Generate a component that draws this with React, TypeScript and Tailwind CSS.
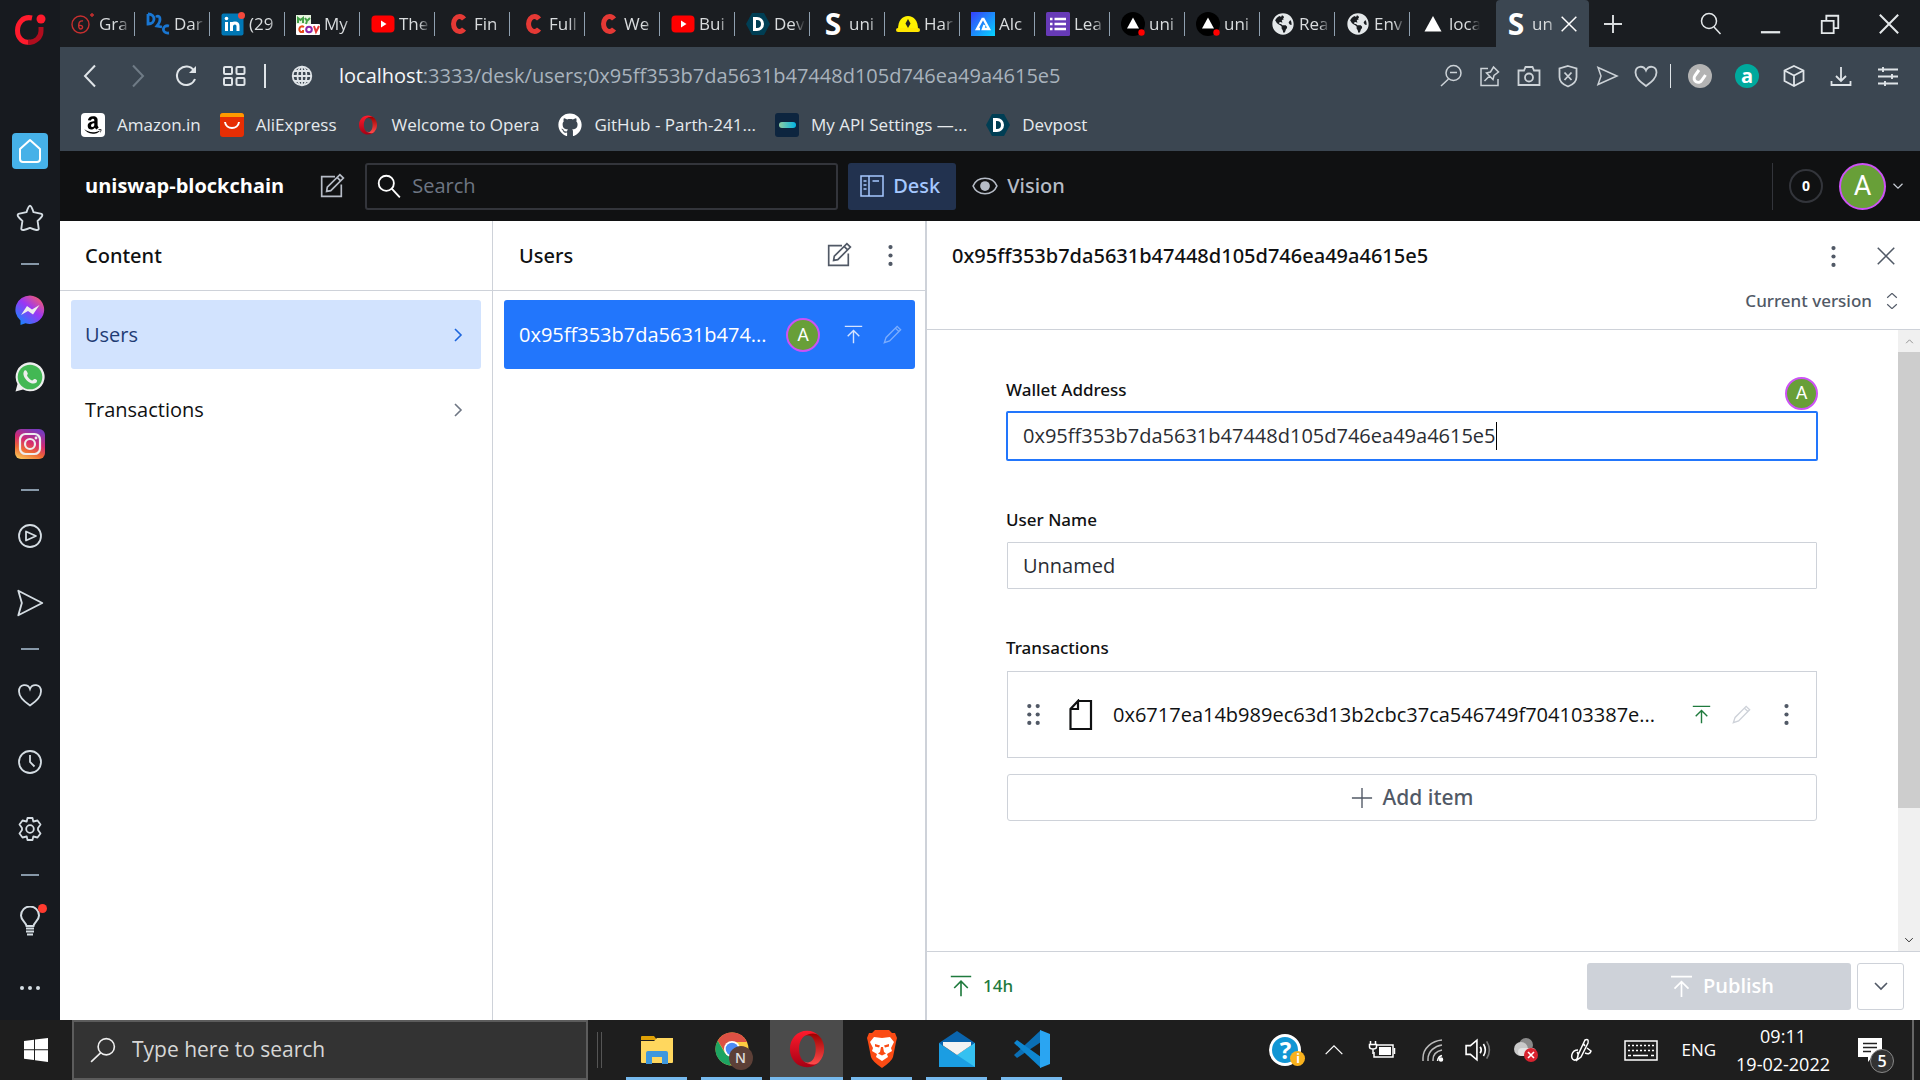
import { ReactNode } from "react";
import { FaAmazon, FaGithub, FaGlobeAmericas } from "react-icons/fa";

type IconProps = {
  size?: number;
  box?: string;
  stroke?: number;
  className?: string;
  children: ReactNode;
};

function Icon({ size = 24, box = "0 0 24 24", stroke = 1.5, className = "", children }: IconProps) {
  return (
    <svg
      width={size}
      height={size}
      viewBox={box}
      fill="none"
      stroke="currentColor"
      strokeWidth={stroke}
      className={`shrink-0 ${className}`}
      aria-hidden="true"
    >
      {children}
    </svg>
  );
}

/* ---------- studio icons ---------- */

type GlyphProps = { size?: number; className?: string };

function ComposeIcon({ size = 35, className }: GlyphProps) {
  return (
    <Icon size={size} box="0 0 25 25" stroke={1.2} className={className}>
      <path d="M15 5.5H5.5V19.5H19.5V11M9 16L9.5 13L18.5 4L21 6.5L12 15.5L9 16ZM16.5 6L19 8.5" />
    </Icon>
  );
}

function PublishIcon({ size = 29, className }: GlyphProps) {
  return (
    <Icon size={size} box="0 0 25 25" stroke={1.2} className={className}>
      <path d="M5 5.5H20M12.5 20V9.5M7.5 14L12.5 9L17.5 14" />
    </Icon>
  );
}

function PencilIcon({ size = 29, className }: GlyphProps) {
  return (
    <Icon size={size} box="0 0 25 25" stroke={1.2} className={className}>
      <path d="M15 7L18 10M5.5 19.5L7 15L16.5 5.5L19.5 8.5L10 18L5.5 19.5Z" />
    </Icon>
  );
}

function DotsIcon({ className }: GlyphProps) {
  return (
    <Icon size={35} box="0 0 25 25" className={className}>
      <g fill="currentColor" stroke="none">
        <circle cx="12.5" cy="6.5" r="1.5" />
        <circle cx="12.5" cy="12.5" r="1.5" />
        <circle cx="12.5" cy="18.5" r="1.5" />
      </g>
    </Icon>
  );
}

function Chevron({ d, size = 16, className }: GlyphProps & { d: string }) {
  return (
    <Icon size={size} box="0 0 16 16" stroke={1.6} className={className}>
      <path d={d} />
    </Icon>
  );
}

const RIGHT = "M5 2L11 8L5 14";
const DOWN = "M2 5L8 11L14 5";
const UP = "M2 11L8 5L14 11";

function Avatar({ size }: { size: "sm" | "md" | "lg" }) {
  const sizes = {
    sm: "size-[33px] text-lg leading-5",
    md: "size-[34px] text-lg leading-5",
    lg: "size-[47px] text-[27px] leading-8",
  };
  return (
    <span
      className={`grid shrink-0 place-items-center rounded-full border-2 border-[#cc52f5] bg-[#689f38] font-['Roboto',sans-serif] text-white ${sizes[size]}`}
    >
      A
    </span>
  );
}

/* ---------- favicons ---------- */

function SanityMark() {
  return <span className="grid size-6 place-items-center text-[30px] leading-6 font-bold text-white">S</span>;
}

function Coursera() {
  return (
    <Icon stroke={5} className="text-[#e53935]">
      <path d="M18 7A6 7.5 0 1 0 18 17" />
    </Icon>
  );
}

function YouTube() {
  return (
    <Icon>
      <rect x="0.5" y="3.5" width="23" height="17" rx="4" fill="#f00" stroke="none" />
      <path d="M10 8.5V15.5L15.5 12Z" fill="#fff" stroke="none" />
    </Icon>
  );
}

function Devpost() {
  return (
    <Icon>
      <path d="M6 1H18L24 12L18 23H6L0 12Z" fill="#003e54" stroke="none" />
      <path d="M8.5 6.5H11A5.5 5.5 0 0 1 11 17.5H8.5Z" stroke="#fff" strokeWidth="3" />
    </Icon>
  );
}

function Vercel({ dot }: { dot?: boolean }) {
  return (
    <Icon>
      {dot && <circle cx="12" cy="12" r="12" fill="#000" stroke="none" />}
      <path d={dot ? "M12 5.5L18 16.5H6Z" : "M12 4L20.5 19.5H3.5Z"} fill="#fff" stroke="none" />
      {dot && <circle cx="20.5" cy="20.5" r="3.2" fill="#f00" stroke="none" />}
    </Icon>
  );
}

function OperaO({ size = 24, className }: GlyphProps) {
  return (
    <Icon size={size} className={className}>
      <defs>
        <linearGradient id="opera-left" x1="0" y1="0" x2="0" y2="1">
          <stop offset="0" stopColor="#ff1b2d" />
          <stop offset="1" stopColor="#a70014" />
        </linearGradient>
        <linearGradient id="opera-right" x1="0" y1="0" x2="0" y2="1">
          <stop offset="0" stopColor="#9c0000" />
          <stop offset="1" stopColor="#ff4b4b" />
        </linearGradient>
      </defs>
      <path
        d="M12 0.5C5.8 0.5 1.2 5.5 1.2 12S5.8 23.5 12 23.5C15 23.5 17.5 22.5 19.3 20.5L14.5 20.3C11 22.5 7 18.5 7 12S11 1.5 14.5 3.7L19.3 3.5C17.5 1.5 15 0.5 12 0.5Z"
        fill="url(#opera-left)"
        stroke="none"
      />
      <path
        d="M10 4.5C12 2.5 17 1 19.5 3.7C24 8 24 16 19.5 20.3C17 23 12 21.5 10 19.5C14.5 22.5 17.5 18 17.5 12S14.5 1.5 10 4.5Z"
        fill="url(#opera-right)"
        stroke="none"
      />
    </Icon>
  );
}

function Globe() {
  return <FaGlobeAmericas className="size-[22px] text-[#e4e8ea]" />;
}

type Tab = { label: string; icon: ReactNode };

const tabs: Tab[] = [
  {
    label: "Gra",
    icon: (
      <Icon className="text-[#c62f2f]" stroke={1.4}>
        <circle cx="9.5" cy="12.5" r="8.5" />
        <path d="M12 9C7 7.5 6.5 17 9.5 17S12.5 12.5 8 13.5M21 1V5M19 3H23" />
      </Icon>
    ),
  },
  {
    label: "Dar",
    icon: (
      <Icon className="text-[#1976d2]" stroke={2.8}>
        <path d="M2 2V12C10 12 10 2 2 2M10 5C14 2 16 8 11 14L16 15M23 14C16 12 15 22 23 21" />
      </Icon>
    ),
  },
  {
    label: "(29",
    icon: (
      <Icon>
        <rect x="0.5" y="1.5" width="22" height="22" rx="2" fill="#0077b5" stroke="none" />
        <path d="M5.5 10V19M10.5 19V10M10.5 14C11 10 17 10 17 14V19" stroke="#fff" strokeWidth="3" />
        <circle cx="5.5" cy="6.5" r="1.8" fill="#fff" stroke="none" />
        <circle cx="20.5" cy="3.5" r="3.5" fill="#f5483c" stroke="none" />
      </Icon>
    ),
  },
  {
    label: "My",
    icon: (
      <Icon stroke={0}>
        <rect y="3" width="15" height="10" fill="#e8f5e0" />
        <rect y="12" width="24" height="11" rx="1" fill="#fff" />
        <path d="M2 11V6L4.5 8L7 6V11M9 6L11 9L14 6M11 9L10 12" stroke="#43a047" strokeWidth="2" />
        <path d="M8 15C3 12 1 21 7 20V18" stroke="#e64a19" strokeWidth="2" />
        <circle cx="13" cy="17.5" r="2.8" stroke="#8e24aa" strokeWidth="2" />
        <path d="M18 14L20 20L23 14" stroke="#e53935" strokeWidth="2" />
      </Icon>
    ),
  },
  { label: "The", icon: <YouTube /> },
  { label: "Fin", icon: <Coursera /> },
  { label: "Full", icon: <Coursera /> },
  { label: "We", icon: <Coursera /> },
  { label: "Bui", icon: <YouTube /> },
  { label: "Dev", icon: <Devpost /> },
  { label: "uni", icon: <SanityMark /> },
  {
    label: "Har",
    icon: (
      <Icon stroke={0}>
        <path d="M2 17C2 9 6 4 12 4S22 9 22 17Z" fill="#fff100" />
        <rect x="0" y="16" width="24" height="4" rx="2" fill="#ffe600" />
        <path d="M12 7L14.5 11.5L12 16L9.5 11.5Z" fill="#222" />
      </Icon>
    ),
  },
  {
    label: "Alc",
    icon: (
      <Icon>
        <defs>
          <linearGradient id="alchemy" x1="0" y1="0" x2="1" y2="1">
            <stop offset="0" stopColor="#363ff9" />
            <stop offset="1" stopColor="#05d5ff" />
          </linearGradient>
        </defs>
        <rect width="24" height="24" fill="url(#alchemy)" stroke="none" />
        <path d="M12 6L6 17H9M12 6L18 17H12L13.5 13" stroke="#fff" strokeWidth="2.4" />
      </Icon>
    ),
  },
  {
    label: "Lea",
    icon: (
      <Icon>
        <rect width="24" height="24" rx="1.5" fill="#673ab7" stroke="none" />
        <path d="M4 7H6.5M4 12H6.5M4 17H6.5M8.5 7H20M8.5 12H20M8.5 17H20" stroke="#fff" strokeWidth="2.6" />
      </Icon>
    ),
  },
  { label: "uni", icon: <Vercel dot /> },
  { label: "uni", icon: <Vercel dot /> },
  { label: "Rea", icon: <Globe /> },
  { label: "Env", icon: <Globe /> },
  { label: "loca", icon: <Vercel /> },
];

function TabStrip() {
  return (
    <div className="flex h-[47px] bg-[#1a1d21] text-[#d9dcde]">
      <div className="flex min-w-0 flex-1">
        {tabs.map((tab, i) => (
          <button key={i} className="flex w-[75px] items-center overflow-hidden pl-[11px]">
            <span className="grid size-6 shrink-0 place-items-center">{tab.icon}</span>
            <span className="ml-1 min-w-0 flex-1 overflow-hidden text-left text-[17px] whitespace-nowrap [mask-image:linear-gradient(to_right,black_65%,transparent)]">
              {tab.label}
            </span>
            <span className={i < tabs.length - 1 ? "ml-1 h-6 w-px bg-[#8fa0b0]" : "ml-1 w-px"} />
          </button>
        ))}
      </div>
      <button className="flex w-[93px] items-center rounded-t-sm bg-[#3b4651] pl-2 text-[17px]">
        <SanityMark />
        <span className="ml-1 w-[24px] overflow-hidden text-left [mask-image:linear-gradient(to_right,black_70%,transparent)]">
          un
        </span>
        <Icon size={16} stroke={2.2} className="ml-[5px] text-white">
          <path d="M1 1L23 23M23 1L1 23" />
        </Icon>
      </button>
      <div className="flex w-[331px] items-center pl-[15px]">
        <button aria-label="New tab">
          <Icon size={18} stroke={2.6}>
            <path d="M12 0V24M0 12H24" />
          </Icon>
        </button>
        <div className="ml-[77px] flex items-center gap-[37px] text-[#e4e8ea]">
          <button aria-label="Search tabs">
            <Icon size={24}>
              <circle cx="10" cy="9" r="7.5" />
              <path d="M15 15L21.5 22" />
            </Icon>
          </button>
          <button aria-label="Minimize">
            <Icon size={22} stroke={2.5}>
              <path d="M1 21H22" />
            </Icon>
          </button>
          <button aria-label="Restore">
            <Icon size={22} stroke={2}>
              <path d="M3 8.5H16V22H3ZM8 8V3H21V16.5H16" />
            </Icon>
          </button>
          <button aria-label="Close">
            <Icon size={22} stroke={2.2}>
              <path d="M2 2L22 22M22 2L2 22" />
            </Icon>
          </button>
        </div>
      </div>
    </div>
  );
}

function AddressBar() {
  return (
    <div className="flex h-[57px] items-center text-[#dfe4e8]">
      <div className="flex flex-1 items-center pl-[18px]">
        <div className="flex items-center gap-6">
          <button aria-label="Back">
            <Icon stroke={2}>
              <path d="M17 1.5L7 12L17 22.5" />
            </Icon>
          </button>
          <button aria-label="Forward" className="text-[#6f7b86]">
            <Icon stroke={2}>
              <path d="M7 1.5L17 12L7 22.5" />
            </Icon>
          </button>
          <button aria-label="Reload">
            <Icon stroke={2}>
              <path d="M20 6.5A9.3 9.3 0 1 0 21 15" />
              <path d="M22 2V9H15Z" fill="currentColor" stroke="none" />
            </Icon>
          </button>
          <button aria-label="Speed dial">
            <Icon stroke={2}>
              <rect x="2" y="3" width="8" height="7" rx="1" />
              <rect x="14.5" y="3" width="8" height="7" rx="1" />
              <rect x="2" y="14" width="8" height="7" rx="1" />
              <rect x="14.5" y="14" width="8" height="7" rx="1" />
            </Icon>
          </button>
        </div>
        <span className="ml-[18px] h-6 w-0.5 bg-[#dfe4e8]" />
        <Icon stroke={1.8} className="ml-6">
          <circle cx="12" cy="12" r="9.3" />
          <ellipse cx="12" cy="12" rx="4.5" ry="9.3" />
          <path d="M12 2.5V21.5M2.5 12H21.5M4 7H20M4 17H20" />
        </Icon>
        <p className="ml-[25px] text-xl whitespace-nowrap text-[#a9b3bd]">
          <span className="text-[#f5f7f8]">localhost</span>
          :3333/desk/users;0x95ff353b7da5631b47448d105d746ea49a4615e5
        </p>
      </div>
      <div className="flex items-center gap-[15px] text-[#ccd2d7]">
        <button aria-label="Zoom">
          <Icon>
            <circle cx="14.5" cy="9" r="7.5" />
            <path d="M9.5 15L2 22M11 8.5H18" />
          </Icon>
        </button>
        <button aria-label="Pin">
          <Icon>
            <path d="M10 4.5H3V21.5H20V15M6.5 17L11.5 12M8.5 9L15 15.5L16 11.5L20.5 8L15.5 3L12.5 8Z" />
          </Icon>
        </button>
        <button aria-label="Snapshot">
          <Icon stroke={1.8}>
            <path d="M1.5 6.5H7L8.5 3H15.5L17 6.5H22.5V21H1.5Z" />
            <circle cx="12" cy="13.5" r="4" />
          </Icon>
        </button>
        <button aria-label="Blocker">
          <Icon stroke={1.8}>
            <path d="M12 2L20.5 4.5V13C20.5 18 16 21 12 22.5C8 21 3.5 18 3.5 13V4.5ZM8.5 8.5L15.5 16M15.5 8.5L8.5 16" />
          </Icon>
        </button>
        <button aria-label="Flow">
          <Icon>
            <path d="M3 3.5L22 12L3 20.5L6 12Z" />
          </Icon>
        </button>
        <button aria-label="Bookmark">
          <Icon stroke={1.8}>
            <path d="M12 22C6 17.5 1.5 14 1.5 8.5C1.5 1.5 9.5 1 12 6.5C14.5 1 22.5 1.5 22.5 8.5C22.5 14 18 17.5 12 22Z" />
          </Icon>
        </button>
      </div>
      <span className="ml-3 h-6 w-px bg-[#dfe4e8]" />
      <div className="ml-[17px] flex items-center gap-[23px] pr-5 text-[#dfe4e8]">
        <button aria-label="Extension">
          <Icon>
            <circle cx="12" cy="12" r="12" fill="#b3b3b3" stroke="none" />
            <path d="M11 6L7 11.5C3.5 17 11 21 14 16L17.5 11" stroke="#fff" strokeWidth="3" />
          </Icon>
        </button>
        <button aria-label="Amazon assistant">
          <span className="grid size-6 place-items-center rounded-full bg-[#00a99d] text-xl leading-5 font-bold text-white">
            a
          </span>
        </button>
        <button aria-label="Wallet">
          <Icon stroke={1.8}>
            <path d="M12 2L21.5 6.5V17L12 22L2.5 17V6.5ZM2.5 6.5L12 11.5L21.5 6.5M12 11.5V22" />
          </Icon>
        </button>
        <button aria-label="Downloads">
          <Icon stroke={1.8}>
            <path d="M12 3V17M7 12L12 17L17 12M2.5 17V21H21.5V17" />
          </Icon>
        </button>
        <button aria-label="Easy setup">
          <Icon stroke={1.9}>
            <path d="M2 5.5H22M2 12.5H22M2 19.5H22M7 3V8M16 10V15M9 17V22" />
          </Icon>
        </button>
      </div>
    </div>
  );
}

const bookmarks: Tab[] = [
  {
    label: "Amazon.in",
    icon: (
      <span className="grid size-6 place-items-center rounded bg-white">
        <FaAmazon className="size-5 text-black" />
      </span>
    ),
  },
  {
    label: "AliExpress",
    icon: (
      <Icon>
        <rect width="24" height="24" rx="3" fill="#e62e04" stroke="none" />
        <path d="M0 4V3A3 3 0 0 1 3 0H21A3 3 0 0 1 24 3V4Z" fill="#ff9a00" stroke="none" />
        <path d="M5 9C6 17 18 17 19 9" stroke="#fff" strokeWidth="2" />
      </Icon>
    ),
  },
  { label: "Welcome to Opera", icon: <OperaO size={20} /> },
  { label: "GitHub - Parth-241...", icon: <FaGithub className="size-6 text-white" /> },
  {
    label: "My API Settings —...",
    icon: (
      <Icon>
        <defs>
          <linearGradient id="tmdb">
            <stop offset="0" stopColor="#90cea1" />
            <stop offset="1" stopColor="#01b4e4" />
          </linearGradient>
        </defs>
        <rect width="24" height="24" rx="3" fill="#0d253f" stroke="none" />
        <rect x="4" y="9" width="17" height="6" rx="3" fill="url(#tmdb)" stroke="none" />
      </Icon>
    ),
  },
  { label: "Devpost", icon: <Devpost /> },
];

function BookmarksBar() {
  return (
    <nav className="flex h-[47px] items-center gap-[19px] pb-[5px] pl-[21px] text-[17px] text-[#e6eaed]">
      {bookmarks.map((b) => (
        <a key={b.label} href="#" className="flex items-center gap-3 whitespace-nowrap">
          <span className="grid w-6 shrink-0 place-items-center">{b.icon}</span>
          {b.label}
        </a>
      ))}
    </nav>
  );
}

/* ---------- opera sidebar ---------- */

function SideItem({ label, children }: { label: string; children: ReactNode }) {
  return (
    <button aria-label={label} className="grid h-[67px] w-full place-items-center last:h-[66px]">
      {children}
    </button>
  );
}

function SideRule() {
  return (
    <div className="grid h-[25px] w-full place-items-center">
      <span className="h-0.5 w-[18px] bg-[#8798a8]" />
    </div>
  );
}

function Sidebar() {
  return (
    <aside className="w-[60px] shrink-0 bg-[#171a1f] text-[#d5dde3]">
      <div className="flex h-[117px] justify-center pt-[13px]">
        <Icon size={34} box="0 0 34 34">
          <path d="M19 5C10 3 4.5 10 4.5 17.5C4.5 25 10 30.5 17 29" stroke="#ff1b2d" strokeWidth="5" />
          <path d="M28 14V18C28 24 23 29.5 15 29.5" stroke="#b00d1e" strokeWidth="5" />
          <circle cx="28" cy="6" r="4.5" fill="#ff1b2d" stroke="none" />
        </Icon>
      </div>
      <SideItem label="Home">
        <span className="grid size-9 place-items-center rounded bg-[#46b1e8] text-white">
          <Icon size={28} box="0 0 28 28" stroke={2}>
            <path d="M14 3L24 12V22Q24 25 21 25H7Q4 25 4 22V12Z" strokeLinejoin="round" />
          </Icon>
        </span>
      </SideItem>
      <SideItem label="Speed dials">
        <Icon size={28} stroke={1.6}>
          <path
            d="M12 1.5Q13.2 1.5 15 7L22 8.5Q24 10 18.5 14.5L19.5 21.5Q19 23.5 12 20.5Q5 23.5 4.5 21.5L5.5 14.5Q0 10 2 8.5L9 7Q10.8 1.5 12 1.5Z"
            strokeLinejoin="round"
          />
        </Icon>
      </SideItem>
      <SideRule />
      <SideItem label="Messenger">
        <Icon size={30} box="0 0 30 30">
          <defs>
            <linearGradient id="msgr" x1="0.1" y1="1" x2="0.9" y2="0">
              <stop offset="0" stopColor="#0a8dff" />
              <stop offset="0.55" stopColor="#9a36f5" />
              <stop offset="1" stopColor="#ff6060" />
            </linearGradient>
          </defs>
          <path d="M15 0.5A14.5 14.2 0 1 1 10.5 28.3L5.5 30V25.5A14.5 14.2 0 0 1 15 0.5Z" fill="url(#msgr)" stroke="none" />
          <path d="M6 20L12 11L17 14.5L24.5 10L18 19.5L13 16Z" fill="#eee" stroke="none" />
        </Icon>
      </SideItem>
      <SideItem label="WhatsApp">
        <Icon size={30} box="0 0 30 30">
          <path d="M0.5 29.5L2.5 22A14.5 14.5 0 1 1 8 27.5Z" fill="#eee" stroke="none" />
          <circle cx="15" cy="15" r="12.3" fill="#43b854" stroke="none" />
          <path
            d="M9.5 8.5C11 7.5 12 9 12.8 11.5C12.5 13 11.5 13 12.5 14.5C14 17 16 18 17 18.5C18.5 18 18.5 16.5 20 17C22.5 18 22.5 18.5 21.5 20.5C16 25 5 14 9.5 8.5Z"
            fill="#eee"
            stroke="none"
          />
        </Icon>
      </SideItem>
      <SideItem label="Instagram">
        <Icon size={30} box="0 0 30 30">
          <defs>
            <linearGradient id="insta" x1="0.2" y1="1" x2="0.6" y2="0">
              <stop offset="0" stopColor="#f7c25a" />
              <stop offset="0.3" stopColor="#ee6a34" />
              <stop offset="0.6" stopColor="#d42a72" />
              <stop offset="1" stopColor="#7a3bbd" />
            </linearGradient>
          </defs>
          <rect width="30" height="30" rx="6" fill="url(#insta)" stroke="none" />
          <g stroke="#eee" strokeWidth="2.2">
            <rect x="5" y="5" width="20" height="20" rx="5.5" />
            <circle cx="15" cy="15" r="5" />
          </g>
          <circle cx="21" cy="9" r="1.4" fill="#eee" stroke="none" />
        </Icon>
      </SideItem>
      <SideRule />
      <SideItem label="Player">
        <Icon stroke={1.8}>
          <circle cx="12" cy="12" r="11" />
          <path d="M8 7.5L18 12L8 16.5Z" strokeLinejoin="round" />
        </Icon>
      </SideItem>
      <SideItem label="My Flow">
        <Icon size={28} stroke={1.6}>
          <path d="M2 1.5L22.5 12L2 22.5L5 12Z" strokeLinejoin="round" />
        </Icon>
      </SideItem>
      <SideRule />
      <SideItem label="Bookmarks">
        <Icon stroke={1.8}>
          <path d="M12 22.5C6 18.5 1 14 1 8.5C1 0.5 10 0.5 12 6C14 0.5 23 0.5 23 8.5C23 14 18 18.5 12 22.5Z" />
        </Icon>
      </SideItem>
      <SideItem label="History">
        <Icon stroke={1.8}>
          <circle cx="12" cy="12" r="11" />
          <path d="M12 5V12L16.5 16.5" />
        </Icon>
      </SideItem>
      <SideItem label="Settings">
        <Icon stroke={1.8}>
          <path
            d="M9.5 1H14.5L15.3 4.5L19.5 3.5L22.5 7.5L20 11V13L22.5 16.5L19.5 20.5L15.3 19.5L14.5 23H9.5L8.7 19.5L4.5 20.5L1.5 16.5L4 13V11L1.5 7.5L4.5 3.5L8.7 4.5Z"
            strokeLinejoin="round"
          />
          <circle cx="12" cy="12" r="3.8" />
        </Icon>
      </SideItem>
      <SideRule />
      <SideItem label="Tips">
        <span className="relative">
          <Icon size={30} box="0 0 30 30" stroke={2}>
            <path d="M11.5 20C11 16 6 14.5 6 9.5A9 9 0 0 1 24 9.5C24 14.5 19 16 18.5 20ZM11 22.5H19M11 25.5H19M12 28.5H18" />
          </Icon>
          <span className="absolute -top-[2px] -right-[2px] size-[9px] rounded-full bg-[#ff3b2f]" />
        </span>
      </SideItem>
      <SideItem label="More">
        <Icon>
          <g fill="currentColor" stroke="none">
            <circle cx="4" cy="13" r="2" />
            <circle cx="12" cy="13" r="2" />
            <circle cx="20" cy="13" r="2" />
          </g>
        </Icon>
      </SideItem>
    </aside>
  );
}

/* ---------- studio ---------- */

function StudioNav() {
  return (
    <header className="flex h-[70px] items-center bg-[#101112] pr-4 pl-[25px]">
      <h1 className="text-xl font-bold whitespace-nowrap text-white">uniswap-blockchain</h1>
      <button aria-label="New document" className="ml-[30px] text-[#b6bcc6]">
        <ComposeIcon />
      </button>
      <label className="ml-4 flex h-[47px] w-[473px] items-center rounded-[3px] border-2 border-[#33353b] pl-[9px] text-white">
        <Icon size={26} stroke={1.7}>
          <circle cx="9.5" cy="9.5" r="7" />
          <path d="M14.5 14.5L22 22.5" />
        </Icon>
        <input
          type="search"
          aria-label="Search"
          placeholder="Search"
          className="ml-[10px] min-w-0 flex-1 bg-transparent text-xl outline-none placeholder:text-[#6e7683]"
        />
      </label>
      <button className="ml-[10px] flex h-[47px] w-[108px] shrink-0 items-center gap-[9px] rounded-[3px] bg-[#22324f] pl-3 font-['Noto_Sans'] text-xl font-medium text-[#a6c8ff]">
        <Icon stroke={1.5}>
          <path d="M1 2H23V22H1ZM9 2V22M12.5 7H19M3.5 7H6.5M3.5 11H6.5M3.5 15H6.5" />
        </Icon>
        Desk
      </button>
      <button className="ml-4 flex items-center gap-[9px] font-['Noto_Sans'] text-xl font-medium text-[#b6bcc6]">
        <Icon size={26} stroke={1.5}>
          <path d="M1 12C5 2.5 19 2.5 23 12C19 21.5 5 21.5 1 12Z" />
          <circle cx="12" cy="12" r="4.5" fill="currentColor" stroke="none" />
        </Icon>
        Vision
      </button>
      <div className="ml-auto flex h-[47px] items-center border-l border-[#33353b] pl-4">
        <button className="grid size-[34px] place-items-center rounded-full border-2 border-[#33353b] text-sm font-bold text-white">
          0
        </button>
        <button className="ml-4 flex items-center gap-[6px] text-[#c9ced6]">
          <Avatar size="lg" />
          <Chevron d={DOWN} size={12} />
        </button>
      </div>
    </header>
  );
}

function ContentPane() {
  return (
    <section className="border-r border-[#ced2d9]">
      <h2 className="flex h-[70px] items-center border-b border-[#ced2d9] pl-[25px] font-['Noto_Sans'] text-xl font-medium">
        Content
      </h2>
      <nav className="flex flex-col gap-[6px] px-[11px] py-[9px] text-xl">
        <a
          href="#"
          className="flex h-[69px] items-center justify-between rounded-[3px] bg-[#d2e3fe] pr-[15px] pl-[14px] text-[#1f3c74]"
        >
          Users
          <Chevron d={RIGHT} className="text-[#1d66dd]" />
        </a>
        <a href="#" className="flex h-[69px] items-center justify-between pr-[15px] pl-[14px]">
          Transactions
          <Chevron d={RIGHT} className="text-[#6e7683]" />
        </a>
      </nav>
    </section>
  );
}

function UsersPane() {
  return (
    <section className="min-w-0 border-r-2 border-[#ced2d9]">
      <div className="flex h-[70px] items-center border-b border-[#ced2d9] pr-[17px] pl-[26px] text-[#515966]">
        <h2 className="flex-1 font-['Noto_Sans'] text-xl font-medium text-[#101112]">Users</h2>
        <button aria-label="New user">
          <ComposeIcon />
        </button>
        <button aria-label="Menu" className="ml-[17px]">
          <DotsIcon />
        </button>
      </div>
      <div className="py-[9px] pr-[10px] pl-[11px]">
        <a href="#" className="flex h-[69px] items-center rounded-[3px] bg-[#2276fc] pr-2 pl-[15px] text-xl text-white">
          <span className="min-w-0 flex-1 truncate">0x95ff353b7da5631b474...</span>
          <span className="ml-[14px]">
            <Avatar size="md" />
          </span>
          <PublishIcon className="ml-[19px] text-[#d5e4ff]" />
          <PencilIcon className="ml-[10px] text-[#7badfd]" />
        </a>
      </div>
    </section>
  );
}

function Scrollbar() {
  return (
    <div className="flex w-[22px] shrink-0 flex-col bg-[#f0f0f0]">
      <div className="grid h-[22px] place-items-center text-[#8a8a8a]">
        <Chevron d={UP} size={9} />
      </div>
      <div className="h-[456px] bg-[#cdcdcd]" />
      <div className="mt-auto grid h-[22px] place-items-center text-[#303030]">
        <Chevron d={DOWN} size={10} />
      </div>
    </div>
  );
}

function DocumentForm() {
  return (
    <form className="flex min-w-0 flex-1 flex-col pt-[45px] pr-[80px] pl-[79px]">
      <div className="flex h-[36px] items-center justify-between">
        <label htmlFor="wallet" className="pb-[6px] font-['Noto_Sans'] text-[17px] font-medium">
          Wallet Address
        </label>
        <Avatar size="sm" />
      </div>
      <div className="flex h-[50px] items-center rounded-[2px] border-2 border-[#2276fc] px-[15px] text-xl text-[#2a2d33]">
        <input
          id="wallet"
          defaultValue="0x95ff353b7da5631b47448d105d746ea49a4615e5"
          className="field-sizing-content outline-none"
        />
        <span className="h-7 w-px bg-black" />
      </div>
      <label htmlFor="username" className="mt-[47px] font-['Noto_Sans'] text-[17px] leading-[24px] font-medium">
        User Name
      </label>
      <input
        id="username"
        defaultValue="Unnamed"
        className="mx-px mt-[10px] h-[47px] rounded-[1px] border border-[#ced2d9] px-[15px] text-xl text-[#2a2d33] outline-none"
      />
      <h3 className="mt-[47px] font-['Noto_Sans'] text-[17px] leading-[24px] font-medium">Transactions</h3>
      <div className="mx-px mt-[11px] flex h-[87px] items-center border border-[#ced2d9] pr-3 pl-[8px] text-xl">
        <button type="button" aria-label="Drag" className="text-[#515966]">
          <Icon size={35} box="0 0 25 25">
            <g fill="currentColor" stroke="none">
              <circle cx="9.5" cy="6.5" r="1.5" />
              <circle cx="15.5" cy="6.5" r="1.5" />
              <circle cx="9.5" cy="12.5" r="1.5" />
              <circle cx="15.5" cy="12.5" r="1.5" />
              <circle cx="9.5" cy="18.5" r="1.5" />
              <circle cx="15.5" cy="18.5" r="1.5" />
            </g>
          </Icon>
        </button>
        <Icon size={32} box="0 0 32 32" stroke={2.2} className="ml-[14px]">
          <path d="M13 2H26V30H5.5V10L13 2V10H5.5" />
        </Icon>
        <span className="ml-4 min-w-0 flex-1 truncate">0x6717ea14b989ec63d13b2cbc37ca546749f704103387e...</span>
        <PublishIcon className="ml-[16px] text-[#1f7a3d]" />
        <PencilIcon className="ml-[11px] text-[#ced2d9]" />
        <button type="button" aria-label="Item menu" className="ml-[13px] text-[#515966]">
          <DotsIcon />
        </button>
      </div>
      <button
        type="button"
        className="mx-px mt-4 flex h-[47px] items-center justify-center gap-[10px] rounded-[3px] border border-[#ced2d9] font-['Noto_Sans'] text-[21px] font-medium text-[#515966]"
      >
        <Icon size={22}>
          <path d="M12 1V23M1 12H23" />
        </Icon>
        Add item
      </button>
    </form>
  );
}

function DocumentPane() {
  return (
    <section className="flex min-w-0 flex-col">
      <div className="h-[109px] border-b border-[#ced2d9] pl-[25px]">
        <div className="flex h-[70px] items-center pr-[25px] text-[#515966]">
          <h2 className="flex-1 font-['Noto_Sans'] text-xl font-medium text-[#101112]">
            0x95ff353b7da5631b47448d105d746ea49a4615e5
          </h2>
          <button aria-label="Document menu">
            <DotsIcon />
          </button>
          <button aria-label="Close document" className="ml-[26px]">
            <Icon size={18} stroke={2}>
              <path d="M1 1L23 23M23 1L1 23" />
            </Icon>
          </button>
        </div>
        <button className="mr-5 ml-auto flex items-center gap-[12px] font-['Noto_Sans'] text-[17px] leading-[20px] font-medium text-[#515966]">
          Current version
          <Icon size={16} box="0 0 16 20" stroke={1.5}>
            <path d="M2 6L8 0.5L14 6M2 14L8 19.5L14 14" />
          </Icon>
        </button>
      </div>
      <div className="flex flex-1">
        <DocumentForm />
        <Scrollbar />
      </div>
      <footer className="flex h-[69px] items-center border-t border-[#ced2d9] pr-4 pl-[17px]">
        <button className="flex items-center gap-[5px] font-['Noto_Sans'] text-[17px] font-medium text-[#1f7a3d]">
          <PublishIcon size={34} />
          14h
        </button>
        <button className="ml-auto flex h-[47px] w-[264px] items-center justify-center gap-1 rounded-[3px] bg-[#ced2d9] text-xl font-semibold text-white">
          <PublishIcon size={35} />
          Publish
        </button>
        <button
          aria-label="More actions"
          className="ml-[6px] grid h-[47px] w-[47px] place-items-center rounded-[3px] border border-[#ced2d9] text-[#515966]"
        >
          <Chevron d={DOWN} size={16} />
        </button>
      </footer>
    </section>
  );
}

/* ---------- windows taskbar ---------- */

function TaskApp({ label, active, children }: { label: string; active?: boolean; children: ReactNode }) {
  return (
    <button
      aria-label={label}
      className={`flex h-[60px] flex-col items-center ${active ? "w-[73px] bg-[#4b4b4b]" : "w-[61px]"}`}
    >
      <span className="grid flex-1 place-items-center">{children}</span>
      <span className="h-[3px] w-full bg-[#76b9ed]" />
    </button>
  );
}

function Taskbar() {
  return (
    <footer className="flex h-[60px] items-center bg-[#1e1e1e] text-white">
      <button aria-label="Start" className="grid w-[72px] place-items-center">
        <svg width="24" height="24" viewBox="0 0 24 24" fill="white">
          <path d="M0 3L10 1.7V11.3H0ZM11 1.5L24 0V11.3H11ZM0 12.3H10V22L0 20.7ZM11 12.3H24V24L11 22.2Z" />
        </svg>
      </button>
      <label className="flex h-[60px] w-[516px] items-center border-2 border-[#5c5c5c] bg-[#333] pl-4">
        <Icon size={26} stroke={1.5} className="text-[#eee]">
          <circle cx="15" cy="9" r="7.5" />
          <path d="M10 14.5L1 23" />
        </Icon>
        <input
          aria-label="Type here to search"
          placeholder="Type here to search"
          className="ml-4 min-w-0 flex-1 bg-transparent text-[21px] outline-none placeholder:text-[#d6d6d6]"
        />
      </label>
      <span className="ml-[9px] h-9 w-[5px] border-x border-[#555]" />
      <div className="ml-6 flex items-center">
        <TaskApp label="File Explorer">
          <Icon size={34} box="0 0 34 34" stroke={0}>
            <path d="M1 5Q1 4 2 4H14L17 8H1Z" fill="#e0a106" />
            <path d="M1 9H14L17 6H33V30Q33 31 32 31H2Q1 31 1 30Z" fill="#ffd75e" />
            <path d="M6 32V21Q6 19 8 19H26Q28 19 28 21V32H22V25H12V32Z" fill="#3e97dd" />
          </Icon>
        </TaskApp>
        <span className="w-[14px]" />
        <TaskApp label="Chrome">
          <span className="relative">
            <Icon size={34} box="0 0 34 34" stroke={0}>
              <circle cx="17" cy="17" r="16.5" fill="#ffcd40" />
              <path d="M2.7 8.7A16.5 16.5 0 0 1 32 10H17A8 8 0 0 0 10 20Z" fill="#dd5144" />
              <path d="M2.7 8.7L10 21A8 8 0 0 0 20 24L15 33.5A16.5 16.5 0 0 1 2.7 8.7Z" fill="#1da462" />
              <circle cx="17" cy="17" r="8" fill="#fff" />
              <circle cx="17" cy="17" r="6.3" fill="#4c8bf5" />
            </Icon>
            <span className="absolute -right-1 -bottom-1 grid size-6 place-items-center rounded-full bg-[#5d4037] text-sm font-semibold text-[#ddd]">
              N
            </span>
          </span>
        </TaskApp>
        <span className="w-[8px]" />
        <TaskApp label="Opera" active>
          <OperaO size={38} />
        </TaskApp>
        <span className="w-[8px]" />
        <TaskApp label="Brave">
          <Icon size={38} box="0 0 34 38" stroke={0}>
            <path d="M10 0H24L27 3H30L32 8L31 12L28 27Q27 31 17 38Q7 31 6 27L3 12L2 8L4 3H7Z" fill="#fb4b14" />
            <path
              d="M9 7L17 8L25 7L29 12L26 18L27 21L22 24L23 27L17 31L11 27L12 24L7 21L8 18L5 12Z"
              fill="#fff"
            />
            <path
              d="M10 14L15 15.5L14 17.5L10 16.5ZM24 14L19 15.5L20 17.5L24 16.5ZM16 17H18L19 22L21 23.5L17 25.5L13 23.5L15 22Z"
              fill="#fb4b14"
            />
          </Icon>
        </TaskApp>
        <span className="w-[14px]" />
        <TaskApp label="Mail">
          <Icon size={36} box="0 0 36 36" stroke={0}>
            <path d="M0 12L18 0L36 12V14H0Z" fill="#0a64ad" />
            <path d="M0 12L18 24L36 12V36H0Z" fill="#1b9de2" />
            <path d="M18 24L36 12V36Z" fill="#35c1f1" />
            <path d="M4 11H32V14.5L18 24L4 14.5Z" fill="#f3f3f3" />
          </Icon>
        </TaskApp>
        <span className="w-[14px]" />
        <TaskApp label="Visual Studio Code">
          <Icon size={38} box="0 0 38 38" stroke={0}>
            <path d="M1 25L4 28L28 12V0Z" fill="#0b6fb5" />
            <path d="M1 13L4 10L28 27V38Z" fill="#0e86d0" />
            <path d="M27 0L37 4V34L27 38Z" fill="#2aa5f2" />
          </Icon>
        </TaskApp>
      </div>
      <div className="ml-auto flex items-center">
        <span className="relative">
          <span className="grid size-8 place-items-center rounded-full border-[3px] border-white bg-[#1296d4] text-2xl leading-6 font-bold">
            ?
          </span>
          <span className="absolute -right-1 bottom-0 grid size-[15px] place-items-center rounded-full bg-[#f9b21d] text-xs font-bold">
            i
          </span>
        </span>
        <Icon size={20} className="ml-[23px]">
          <path d="M2 17L12 7L22 17" />
        </Icon>
        <Icon size={28} box="0 0 28 28" className="ml-6">
          <path d="M9 9H25V21H6V16" />
          <rect x="11" y="11" width="12" height="8" fill="currentColor" stroke="none" />
          <path d="M26.5 12V18M2.5 5V9M7.5 5V9M1.5 8.5H8.5V11Q8.5 13 5 13T1.5 11ZM5 13V18" />
        </Icon>
        <Icon size={24} className="ml-6">
          <path d="M3 23V20C3 10 12 3 22 2M8 23V21C8 13 15 8 22 7M13 23V22C13 16 17 13 22 12" stroke="#bbb" />
          <path d="M17.5 23Q18 18.5 22 17.5" />
          <circle cx="21" cy="21.5" r="1.5" fill="currentColor" />
        </Icon>
        <Icon size={26} className="ml-[21px]">
          <path d="M1 8H5L11 3V21L5 16H1ZM14 9Q16 12 14 15M17 6.5Q20.5 12 17 17.5" />
          <path d="M20 4Q25 12 20 20" stroke="#777" />
        </Icon>
        <Icon size={26} box="0 0 26 26" stroke={0} className="ml-[22px]">
          <circle cx="13" cy="8" r="7" fill="#8a8a8a" />
          <circle cx="8" cy="12" r="7" fill="#c9c9c9" />
          <rect x="5" y="11" width="18" height="8" rx="4" fill="#e2e2e2" />
          <circle cx="18" cy="18" r="7" fill="#d8232f" />
          <path d="M15 15L21 21M21 15L15 21" stroke="#fff" strokeWidth="1.6" />
        </Icon>
        <Icon size={24} className="ml-[30px]">
          <path d="M16 2Q20 0 19 5L12 19L8 22L9 17ZM14 5L16 8M9 12C2 12 1 21 5 22S10 16 8 14M18 10L22 13Q21 17 16 15" />
        </Icon>
        <Icon size={34} box="0 0 34 34" className="ml-[31px]">
          <rect x="1" y="8" width="32" height="19" />
          <path d="M4 12.5H30M4 17.5H30" strokeDasharray="2 2" />
          <path d="M4 22.5H7M9 22.5H24M27 22.5H30" />
        </Icon>
        <span className="ml-[23px] text-[17px]">ENG</span>
        <div className="ml-[20px] text-center text-lg leading-[28px]">
          <p>09:11</p>
          <p>19-02-2022</p>
        </div>
        <span className="relative ml-[28px] w-[54px]">
          <Icon size={26} box="0 0 26 26" stroke={0}>
            <path d="M0 1H24V20H14L10 25V20H0Z" fill="#fff" />
            <path d="M5 6.5H19M5 10.5H19M5 14.5H13" stroke="#222" strokeWidth="1.5" />
          </Icon>
          <span className="absolute top-3 left-3 grid size-6 place-items-center rounded-full border border-[#888] bg-[#333] text-base leading-4 font-semibold">
            5
          </span>
        </span>
        <span className="mr-[6px] h-[60px] w-0.5 bg-[#666]" />
      </div>
    </footer>
  );
}

export default function App() {
  return (
    <div className="flex min-h-screen flex-col bg-white font-['Open_Sans','Noto_Sans',sans-serif] text-[#101112]">
      <div className="flex flex-1">
        <Sidebar />
        <div className="flex min-w-0 flex-1 flex-col">
          <div className="bg-[#3b4651]">
            <TabStrip />
            <AddressBar />
            <BookmarksBar />
          </div>
          <StudioNav />
          <main className="grid flex-1 grid-cols-[433fr_434fr_993fr]">
            <ContentPane />
            <UsersPane />
            <DocumentPane />
          </main>
        </div>
      </div>
      <Taskbar />
    </div>
  );
}
